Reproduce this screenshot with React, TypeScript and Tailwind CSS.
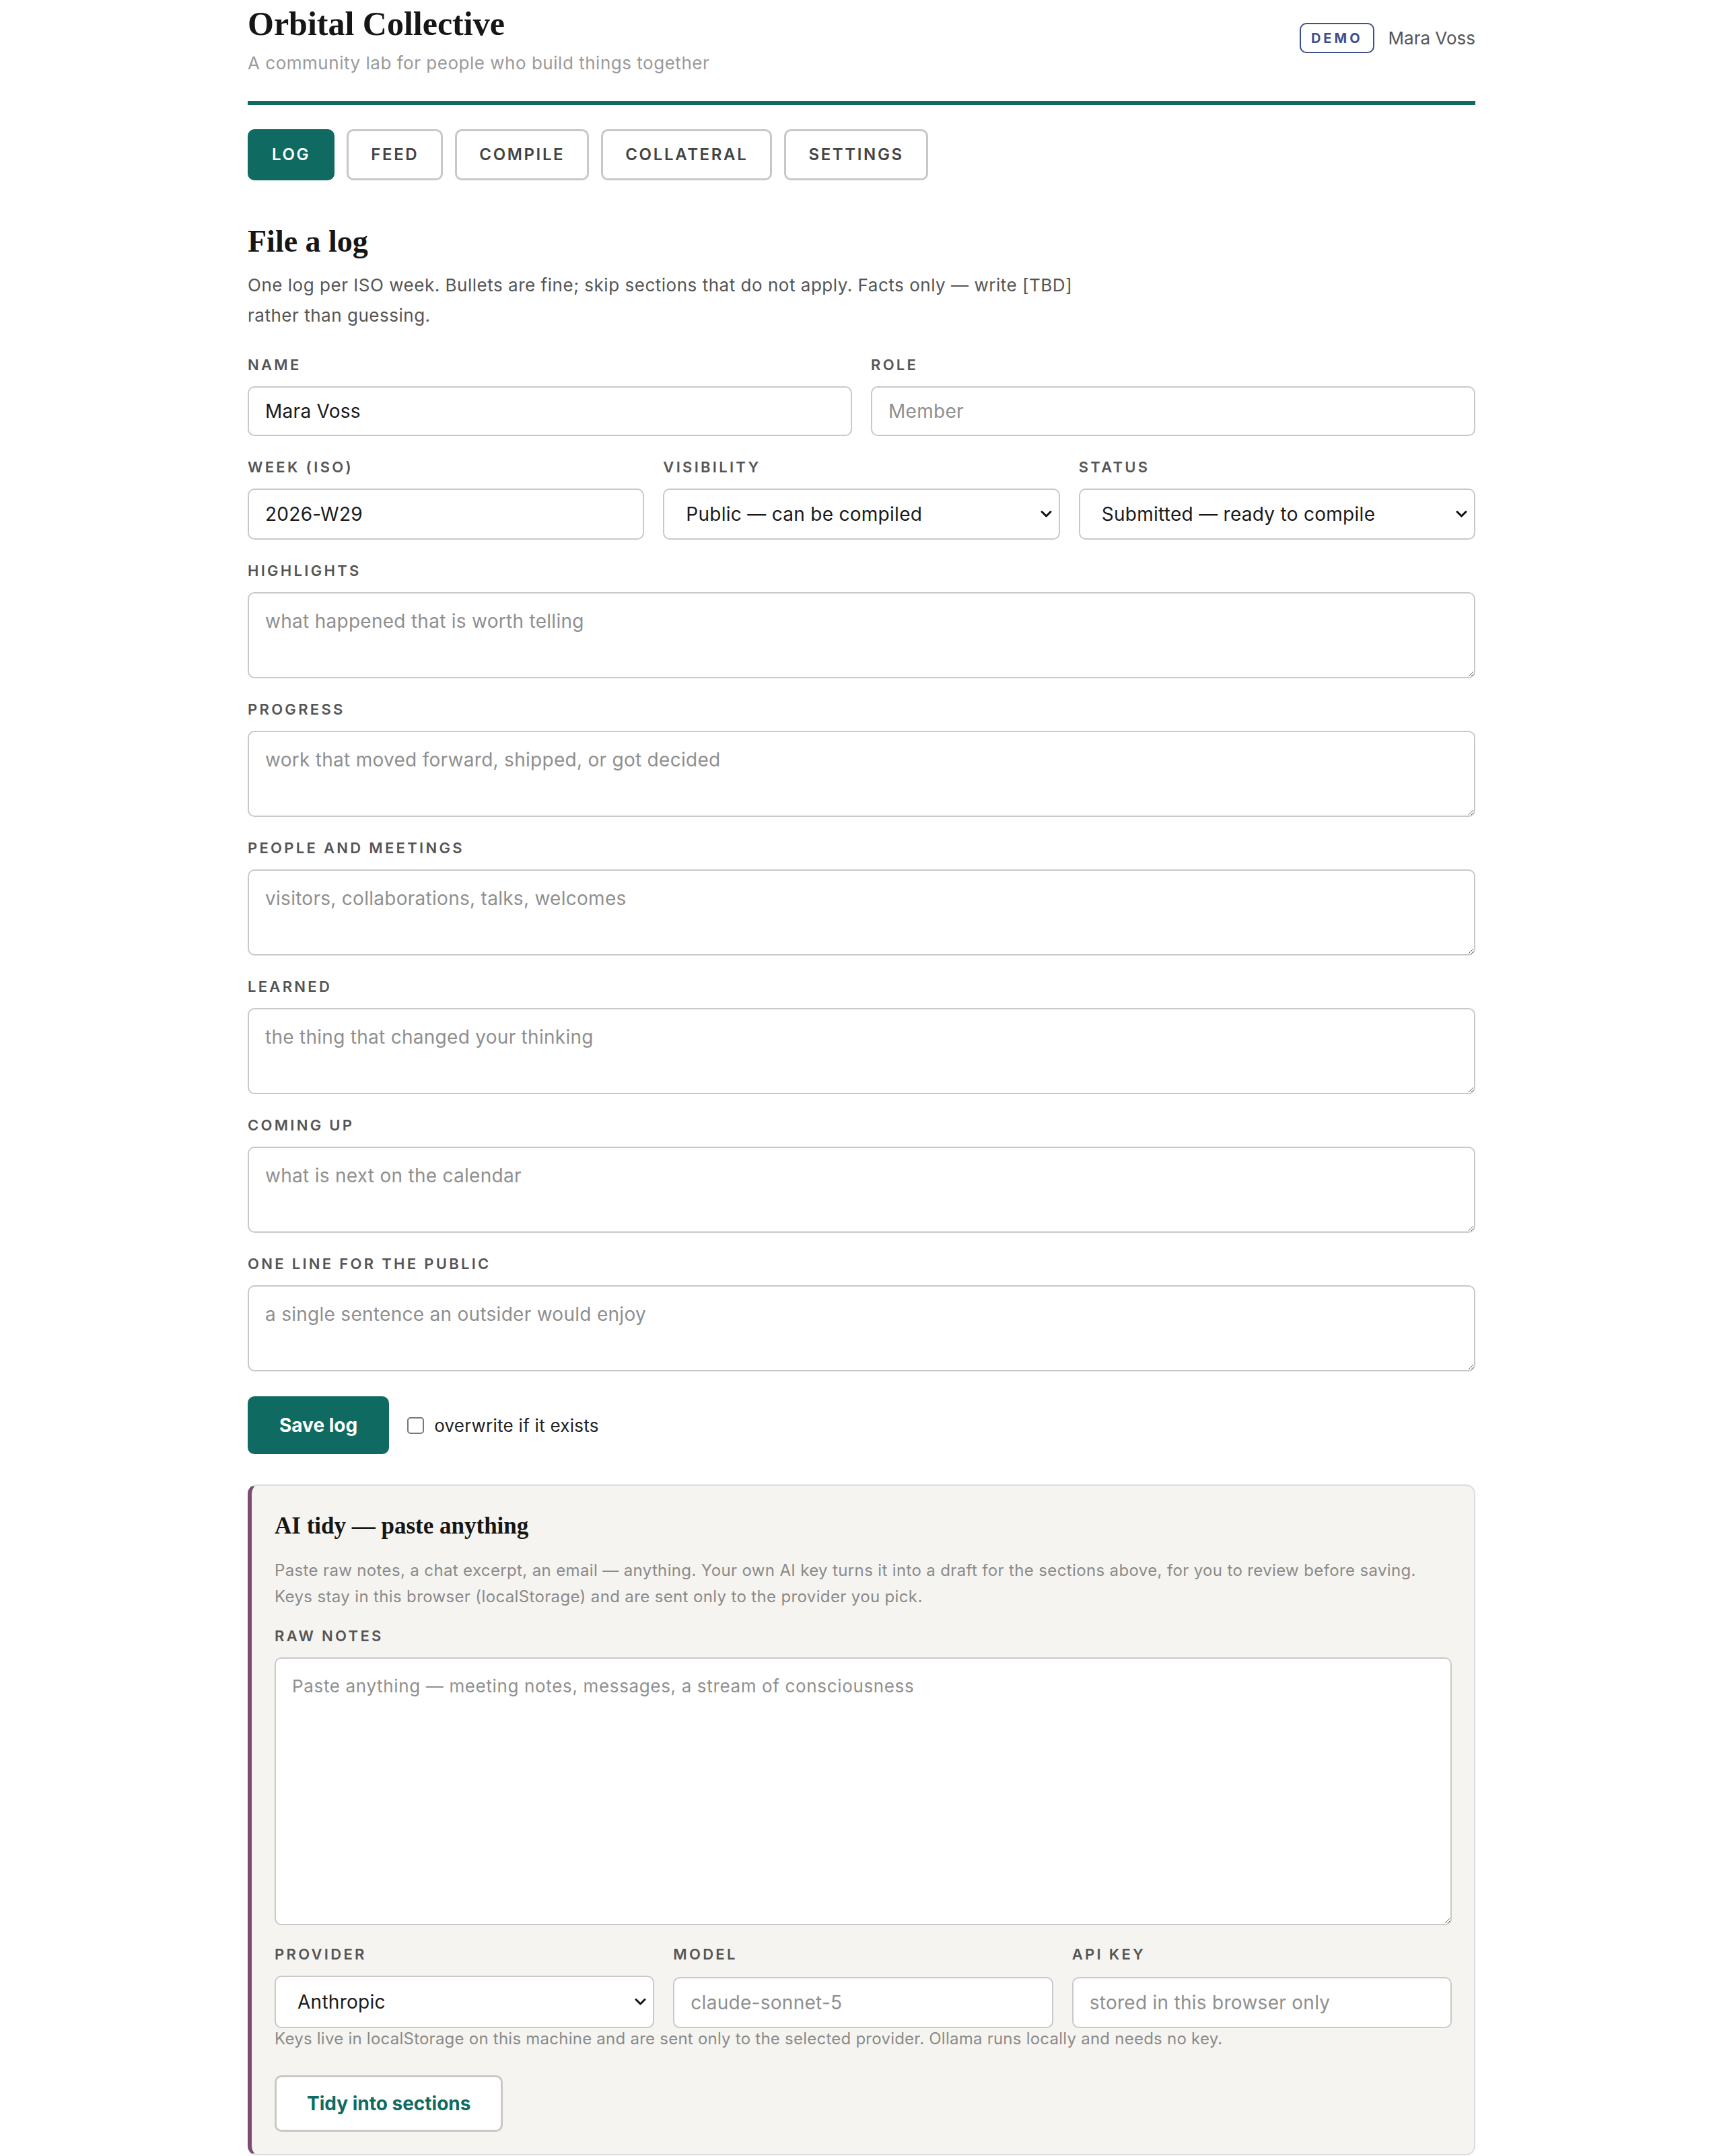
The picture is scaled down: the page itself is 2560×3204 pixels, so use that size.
import { useState } from 'react'

const serif = "font-['Liberation_Serif',serif]"
const labelCls = 'block text-[22px] leading-[26px] font-semibold tracking-[0.15em] uppercase text-[#555] mb-[19px]'
const fieldCls =
  'w-full bg-white border-2 border-[#c9c9c9] rounded-[10px] px-[24px] text-[28px] tracking-[0.01em] text-[#1a1a1a] placeholder:text-[#8f8f8f] outline-none'

const tabs = ['Log', 'Feed', 'Compile', 'Collateral', 'Settings']

const sections = [
  { label: 'Highlights', ph: 'what happened that is worth telling' },
  { label: 'Progress', ph: 'work that moved forward, shipped, or got decided' },
  { label: 'People and meetings', ph: 'visitors, collaborations, talks, welcomes' },
  { label: 'Learned', ph: 'the thing that changed your thinking' },
  { label: 'Coming up', ph: 'what is next on the calendar' },
  { label: 'One line for the public', ph: 'a single sentence an outsider would enjoy' },
]

function Chevron() {
  return (
    <svg width="17" height="12" viewBox="0 0 17 12" fill="none"
      className="absolute right-[12px] top-1/2 -translate-y-1/2 pointer-events-none">
      <polyline points="2,2.5 8.5,9 15,2.5" stroke="#111" strokeWidth="3" strokeLinecap="round" strokeLinejoin="round" />
    </svg>
  )
}

function Select({ value, options, h = 'h-[76px]' }: { value: string; options: string[]; h?: string }) {
  const [v, setV] = useState(value)
  return (
    <div className="relative">
      <select value={v} onChange={e => setV(e.target.value)}
        className={`${fieldCls} ${h} appearance-none pl-[32px] pr-[44px] cursor-pointer`}>
        {options.map(o => <option key={o}>{o}</option>)}
      </select>
      <Chevron />
    </div>
  )
}

export default function App() {
  const [tab, setTab] = useState('Log')
  const [name, setName] = useState('Mara Voss')
  const [week, setWeek] = useState('2026-W29')

  return (
    <div className="min-h-screen bg-white font-['Inter',sans-serif] text-[#1a1a1a]">
      <div className="mx-auto w-[1824px] pb-[60px]">
        <header className="flex items-start justify-between">
          <div>
            <h1 className={`${serif} font-bold text-[50px] leading-[56px] pt-[7px] text-[#161616]`}>Orbital Collective</h1>
            <p className="mt-[15px] text-[26px] leading-[32px] tracking-[0.02em] text-[#9a9a9a]">
              A community lab for people who build things together
            </p>
          </div>
          <div className="flex items-center gap-[21px] mt-[34px]">
            <span className="h-[45px] px-[15px] flex items-center border-2 border-[#3f4f8d] rounded-[10px] text-[20px] font-bold tracking-[0.2em] text-[#3f4f8d]">
              DEMO
            </span>
            <span className="text-[26px] text-[#555]">Mara Voss</span>
          </div>
        </header>

        <div className="mt-[40px] h-[6px] bg-[#0f6b61]" />

        <nav className="mt-[36px] flex gap-[18px]">
          {tabs.map(t => (
            <button key={t} type="button" onClick={() => setTab(t)}
              className={`h-[76px] px-[33px] rounded-[10px] border-[3px] text-[24px] font-semibold uppercase tracking-[0.11em] ${
                tab === t ? 'bg-[#0f6b61] border-[#0f6b61] text-white' : 'bg-white border-[#c8c8c8] text-[#444]'
              }`}>
              {t}
            </button>
          ))}
        </nav>

        <section>
          <h2 className={`${serif} font-bold text-[46px] leading-[50px] mt-[66px] text-[#161616]`}>File a log</h2>
          <p className="mt-[17px] max-w-[1280px] text-[26px] leading-[45px] tracking-[0.02em] text-[#555]">
            One log per ISO week. Bullets are fine; skip sections that do not apply. Facts only — write [TBD] rather than guessing.
          </p>

          <div className="mt-[38px] flex flex-col gap-[33px]">
            <div className="grid grid-cols-2 gap-[28px]">
              <div>
                <label className={labelCls}>Name</label>
                <input value={name} onChange={e => setName(e.target.value)} className={`${fieldCls} h-[74px]`} />
              </div>
              <div>
                <label className={labelCls}>Role</label>
                <input placeholder="Member" className={`${fieldCls} h-[74px]`} />
              </div>
            </div>

            <div className="grid grid-cols-3 gap-[28px]">
              <div>
                <label className={labelCls}>Week (ISO)</label>
                <input value={week} onChange={e => setWeek(e.target.value)} className={`${fieldCls} h-[76px]`} />
              </div>
              <div>
                <label className={labelCls}>Visibility</label>
                <Select value="Public — can be compiled" options={['Public — can be compiled', 'Private — members only']} />
              </div>
              <div>
                <label className={labelCls}>Status</label>
                <Select value="Submitted — ready to compile" options={['Draft', 'Submitted — ready to compile']} />
              </div>
            </div>

            {sections.map(s => (
              <div key={s.label}>
                <label className={labelCls}>{s.label}</label>
                <textarea placeholder={s.ph} className={`${fieldCls} block h-[128px] pt-[20px] leading-[42px]`} />
              </div>
            ))}
          </div>

          <div className="mt-[37px] flex items-center">
            <button type="button" className="h-[86px] px-[47px] rounded-[10px] bg-[#0f6b61] text-white text-[28px] font-bold">
              Save log
            </button>
            <label className="ml-[27px] flex items-center gap-[15px] text-[26px] tracking-[0.01em] text-[#222] cursor-pointer">
              <input type="checkbox" className="appearance-none w-[25px] h-[25px] border-2 border-[#777] rounded-[5px] bg-white checked:bg-[#0f6b61]" />
              overwrite if it exists
            </label>
          </div>

          <div className="mt-[45px] bg-[#f5f4f0] border-2 border-[#dcdcdc] border-l-[6px] border-l-[#7b4b73] rounded-[14px] pl-[34px] pr-[33px] pt-[39px] pb-[33px]">
            <h3 className={`${serif} font-bold text-[35px] leading-[42px] text-[#161616]`}>AI tidy — paste anything</h3>
            <p className="mt-[25px] text-[24px] leading-[39px] tracking-[0.015em] text-[#8a8a8a]">
              Paste raw notes, a chat excerpt, an email — anything. Your own AI key turns it into a draft for the sections above, for you to review before saving.
              <br />
              Keys stay in this browser (localStorage) and are sent only to the provider you pick.
            </p>

            <div className="mt-[26px]">
              <label className={labelCls}>Raw notes</label>
              <textarea placeholder="Paste anything — meeting notes, messages, a stream of consciousness"
                className={`${fieldCls} block h-[398px] pt-[20px] leading-[42px] !text-[26px] !tracking-[0.025em]`} />
            </div>

            <div className="mt-[30px] grid grid-cols-3 gap-[28px]">
              <div>
                <label className={labelCls}>Provider</label>
                <Select value="Anthropic" options={['Anthropic', 'OpenAI', 'Ollama']} h="h-[78px]" />
              </div>
              <div>
                <label className={labelCls}>Model</label>
                <input placeholder="claude-sonnet-5" className={`${fieldCls} h-[76px] mt-[2px]`} />
              </div>
              <div>
                <label className={labelCls}>API key</label>
                <input type="password" placeholder="stored in this browser only" className={`${fieldCls} h-[76px] mt-[2px]`} />
              </div>
            </div>
            <p className="mt-[1px] text-[24px] leading-[30px] tracking-[0.01em] text-[#8a8a8a]">
              Keys live in localStorage on this machine and are sent only to the selected provider. Ollama runs locally and needs no key.
            </p>

            <button type="button" className="mt-[39px] h-[84px] px-[45px] rounded-[10px] bg-white border-[3px] border-[#c8c8c8] text-[28px] font-bold text-[#0f6b61]">
              Tidy into sections
            </button>
          </div>
        </section>
      </div>
    </div>
  )
}
